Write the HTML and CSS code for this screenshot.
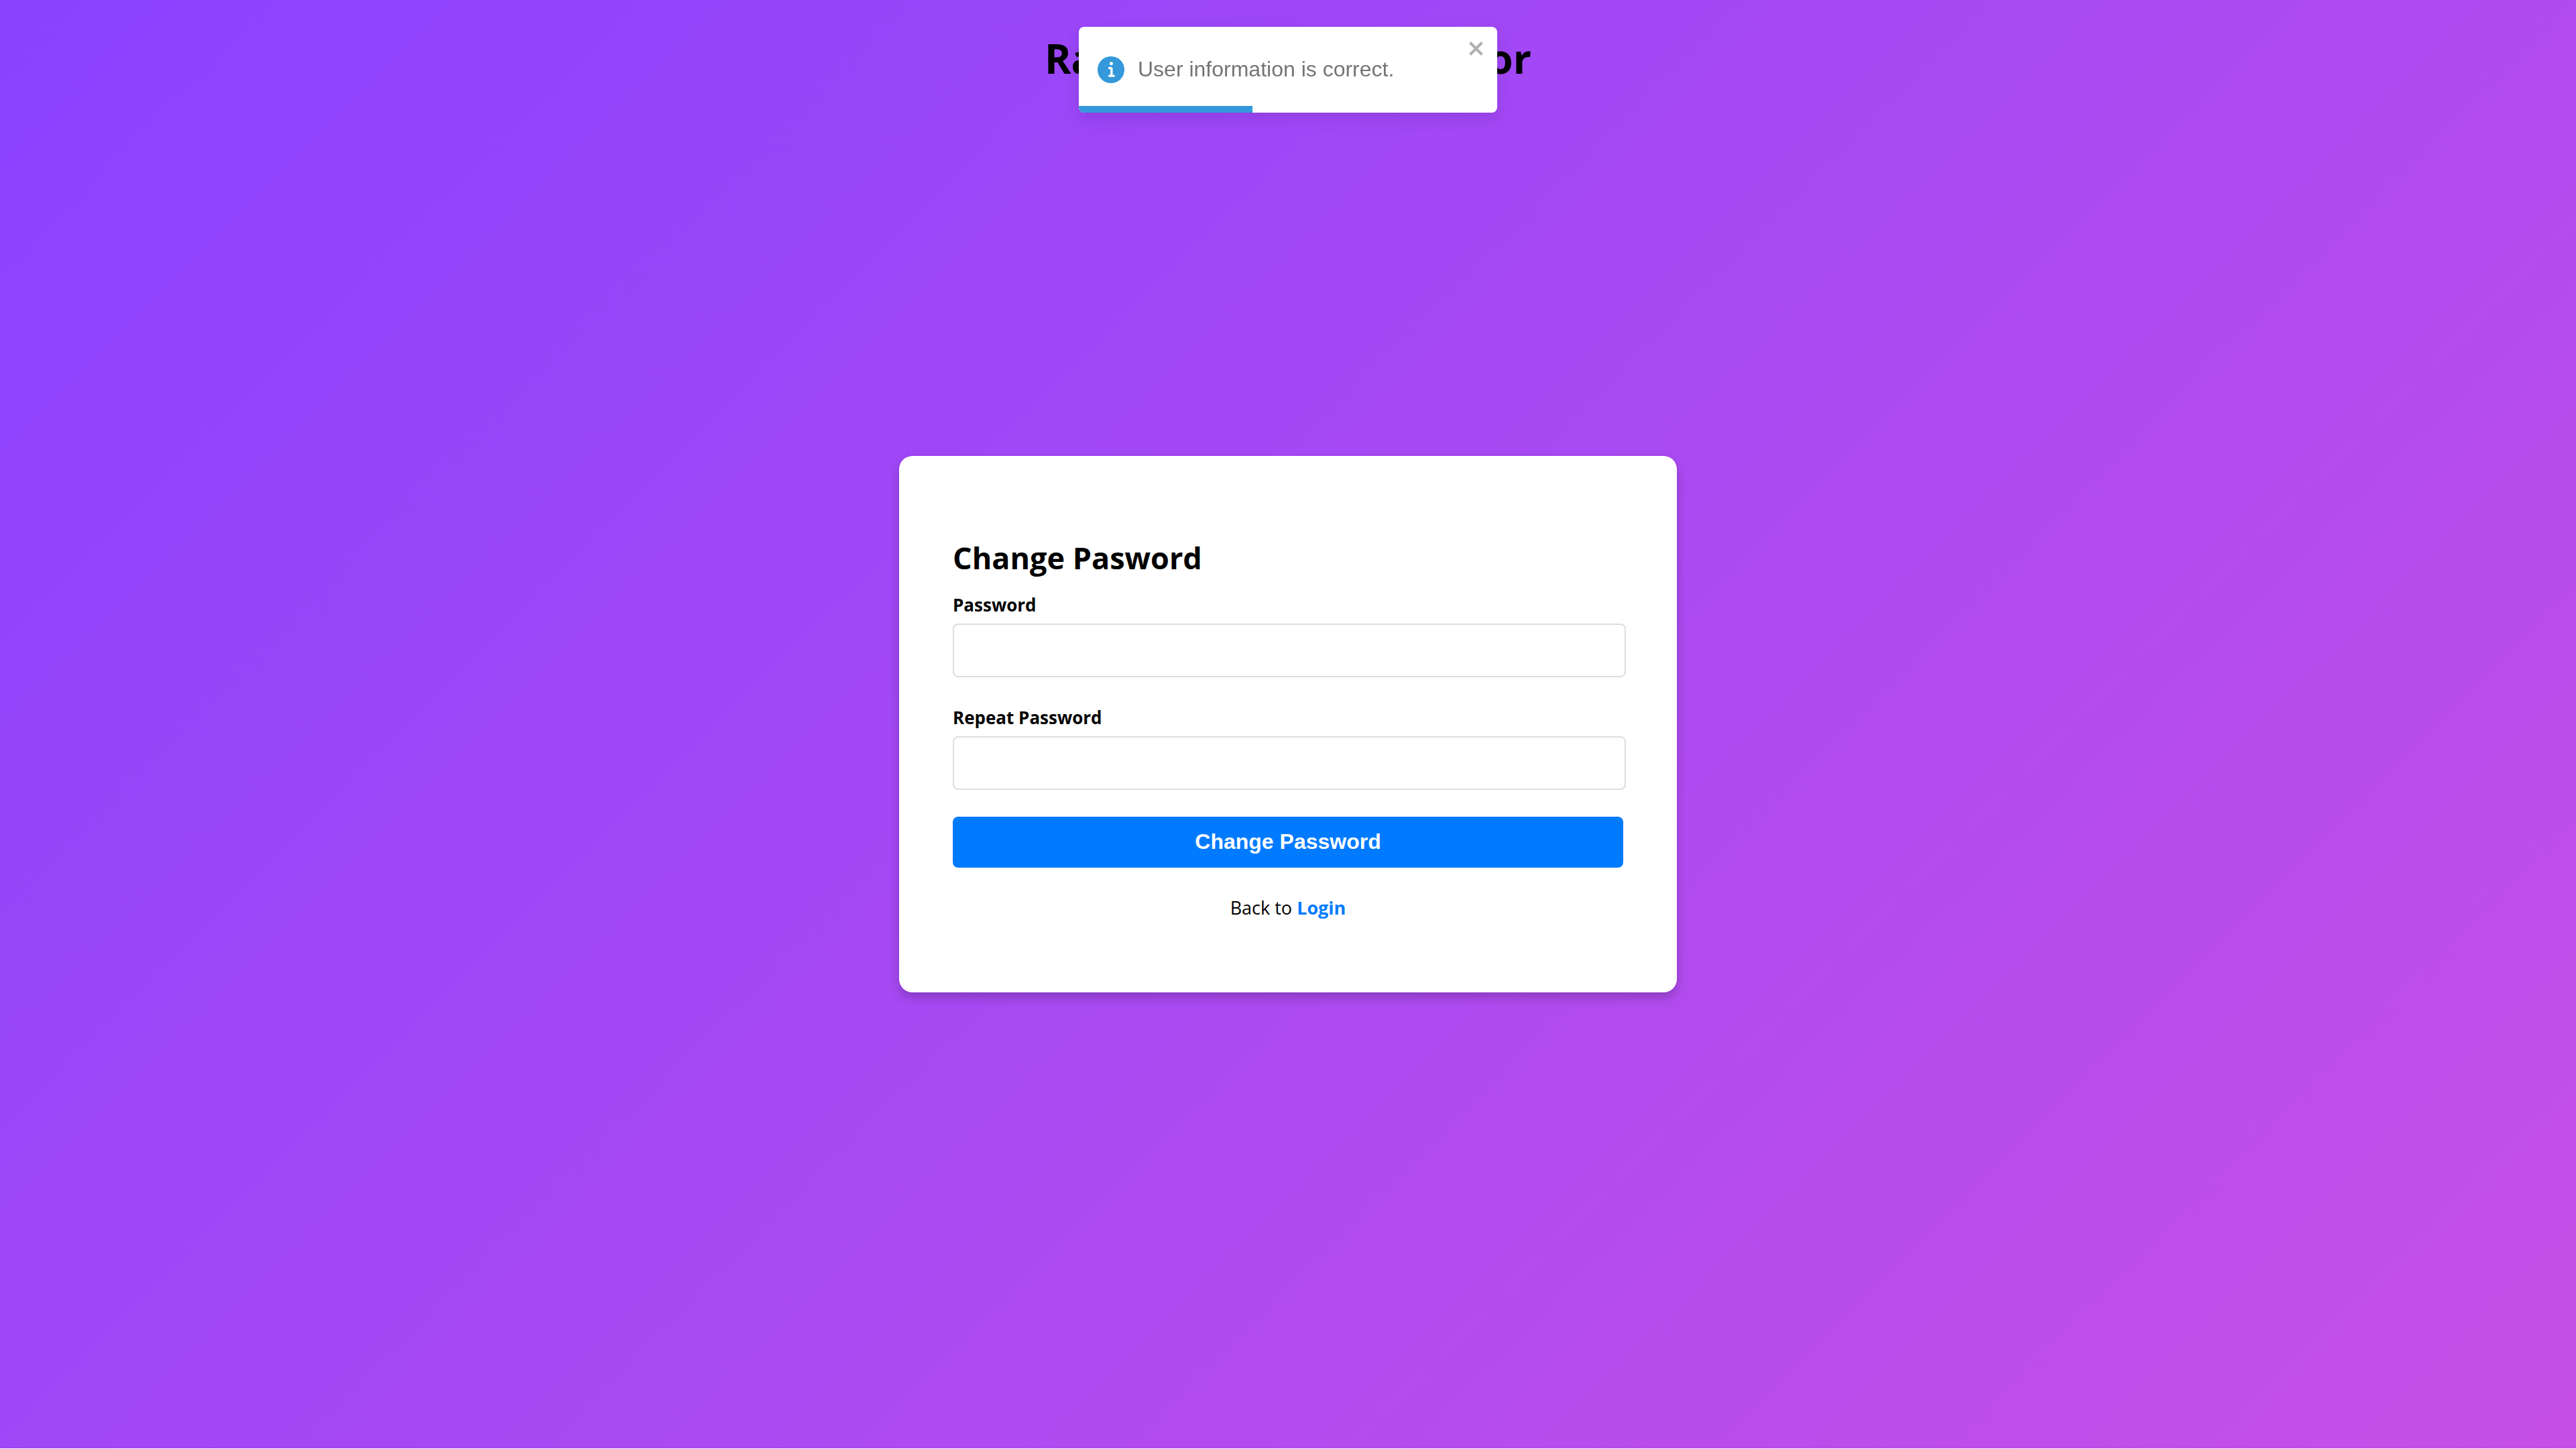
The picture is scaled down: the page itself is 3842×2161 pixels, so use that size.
FILE: index.html
```html
<!DOCTYPE html>
<html lang="en">
<head>
<meta charset="utf-8">
<meta name="viewport" content="width=device-width, initial-scale=1">
<title>Change Password</title>
<link rel="stylesheet" href="styles.css">
</head>
<body class="page">
  <header class="page-header">
    <h1 class="page-title">Random User Generator</h1>
  </header>
  <main class="card">
    <form class="form">
      <h2 class="form-title">Change Pasword</h2>
      <div class="field">
        <label class="field-label" for="password">Password</label>
        <input class="field-input" id="password" type="password">
      </div>
      <div class="field">
        <label class="field-label" for="repeat-password">Repeat Password</label>
        <input class="field-input" id="repeat-password" type="password">
      </div>
      <button class="submit" type="submit">Change Password</button>
      <p class="form-footer">Back to <a class="link" href="#login">Login</a></p>
    </form>
  </main>
  <div class="toast" role="alert">
    <svg class="toast-icon" viewBox="0 0 24 24" aria-hidden="true"><path d="M12 0a12 12 0 1012 12A12.013 12.013 0 0012 0zm.25 5a1.5 1.5 0 11-1.5 1.5 1.5 1.5 0 011.5-1.5zm2.25 13.5h-4a1 1 0 010-2h.75a.25.25 0 00.25-.25v-4.5a.25.25 0 00-.25-.25h-.75a1 1 0 010-2h1a2 2 0 012 2v4.75a.25.25 0 00.25.25h.75a1 1 0 110 2z"/></svg>
    <span class="toast-text">User information is correct.</span>
    <button class="toast-close" type="button" aria-label="close">
      <svg class="toast-close-icon" viewBox="0 0 14 16" aria-hidden="true"><path d="M7.71 8.23l3.75 3.75-1.48 1.48-3.75-3.75-3.75 3.75L1 11.98l3.75-3.75L1 4.48 2.48 3l3.75 3.75L9.98 3l1.48 1.48-3.75 3.75z"/></svg>
    </button>
    <div class="toast-progress"></div>
  </div>
</body>
</html>
```

FILE: styles.css
```css
* {
  box-sizing: border-box;
}

html {
  background: #fff;
}

.page {
  margin: 0;
  min-height: calc(100vh - 1px);
  display: grid;
  grid-template-rows: 1fr auto 1fr;
  justify-items: center;
  background: linear-gradient(135deg, #8a42ff, #c650e6);
  color: #000;
  font-family: "Segoe UI", "Open Sans", "Noto Sans", sans-serif;
  font-size: 26px;
  line-height: 40px;
}

.page-title {
  margin: 43px 0 0;
  font-size: 60px;
  line-height: 88px;
}

.card {
  width: 1160px;
  max-width: 100%;
  padding: 120px 80px 106px;
  border-radius: 20px;
  background: #fff;
  box-shadow: 0 8px 16px rgba(0, 0, 0, 0.2);
}

.form {
  display: flex;
  flex-direction: column;
}

.form-title {
  margin: 0 0 18px;
  font-size: 45px;
  line-height: 64px;
}

.field {
  margin-bottom: 40px;
}

.field-label {
  display: block;
  margin-bottom: 8px;
  font-weight: 700;
}

.field-input {
  display: block;
  width: calc(100% + 4px);
  height: 80px;
  padding: 20px;
  border: 2px solid #ddd;
  border-radius: 8px;
  background: #fff;
  font: inherit;
}

.submit {
  height: 76px;
  padding: 0 0 2px;
  border: 0;
  border-radius: 8px;
  background: #007bff;
  color: #fff;
  font: 700 32px "Liberation Sans", Arial, sans-serif;
  cursor: pointer;
}

.form-footer {
  margin: 40px 0 0;
  font-size: 27px;
  text-align: center;
}

.link {
  color: #007bff;
  font-weight: 700;
  text-decoration: none;
}

.toast {
  position: fixed;
  top: 40px;
  left: 50%;
  transform: translateX(-50%);
  display: flex;
  align-items: center;
  gap: 20px;
  width: 624px;
  height: 128px;
  padding: 28px;
  overflow: hidden;
  border-radius: 8px;
  background: #fff;
  color: #757575;
  font-family: "Liberation Sans", Arial, sans-serif;
  font-size: 32px;
  line-height: 36px;
  box-shadow: 0 8px 24px rgba(0, 0, 0, 0.1);
}

.toast-icon {
  width: 40px;
  height: 40px;
  fill: #3498db;
}

.toast-text {
  padding-bottom: 2px;
}

.toast-close {
  position: absolute;
  top: 16px;
  right: 16px;
  display: flex;
  padding: 0;
  border: 0;
  background: none;
  opacity: 0.3;
  cursor: pointer;
}

.toast-close-icon {
  width: 28px;
  height: 32px;
}

.toast-progress {
  position: absolute;
  left: 0;
  bottom: 0;
  width: 259px;
  height: 10px;
  background: #3498db;
}
```
